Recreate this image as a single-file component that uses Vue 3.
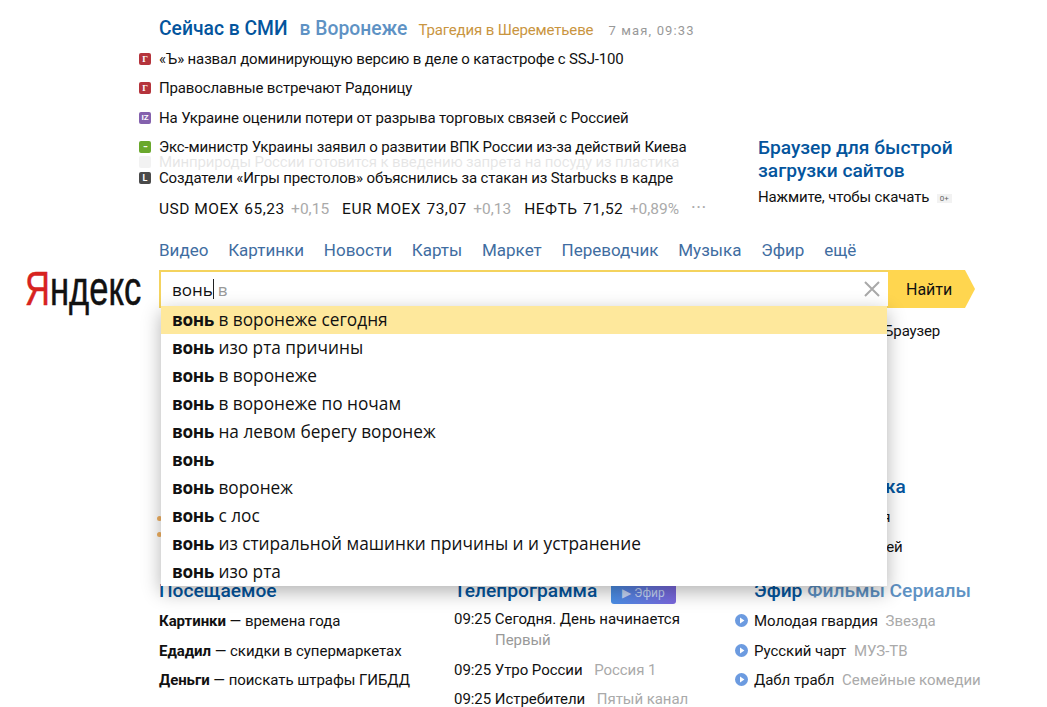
<template>
  <div class="page">
    <div class="top">
      <div class="news">
        <div class="news-head">
          <span class="tab-active">Сейчас в СМИ</span>
          <span class="tab">в Воронеже</span>
          <span class="tab-topic">Трагедия в Шереметьеве</span>
          <span class="date">7 мая, 09:33</span>
        </div>
        <ul class="news-list">
          <li v-for="n in news" :key="n.text" class="news-item">
            <span class="badge" :class="n.kind">{{ n.mark }}</span>{{ n.text }}
          </li>
          <li class="news-item news-ghost">
            <span class="badge ghost"></span>Минприроды России готовится к введению запрета на посуду из пластика
          </li>
        </ul>
        <div class="stocks">
          <span v-for="s in stocks" :key="s.name" class="stock">
            {{ s.name }} <span class="stock-val">{{ s.value }}</span> <span class="stock-diff">{{ s.diff }}</span>
          </span>
          <span class="stock-more">···</span>
        </div>
      </div>
      <div class="promo">
        <div class="promo-title">Браузер для быстрой<br>загрузки сайтов</div>
        <div class="promo-sub">Нажмите, чтобы скачать <span class="age">0+</span></div>
      </div>
    </div>

    <nav class="services">
      <span v-for="s in services" :key="s">{{ s }}</span>
    </nav>

    <div class="search-row">
      <div class="logo"><span class="logo-text"><span class="logo-red">Я</span>ндекс</span></div>
      <div class="search">
        <div class="input">
          <span class="typed">вонь</span><span class="caret"></span><span class="hint">в</span>
          <svg class="clear" width="16" height="16" viewBox="0 0 16 16">
            <path d="M1 1l14 14M15 1L1 15" stroke="#a9a9a9" stroke-width="2" fill="none" />
          </svg>
        </div>
        <div class="go">Найти</div>
        <ul class="suggest">
          <li v-for="(s, i) in suggestions" :key="s" :class="{ on: i === 0 }"><b>вонь</b>{{ s }}</li>
        </ul>
      </div>
    </div>

    <div class="middle">
      <div class="mid-left">
        <div class="mid-line">Новый Яндекс.Браузер</div>
        <div class="mid-dots"><i></i><i></i></div>
      </div>
      <div class="mid-right">
        <div class="mid-title">Карта Воронежа</div>
        <div class="mid-text">Кино и расписания</div>
        <div class="mid-text">Лента всех новостей</div>
      </div>
    </div>

    <div class="bottom">
      <section class="col-visited">
        <h3 class="col-title">Посещаемое</h3>
        <div v-for="v in visited" :key="v.name" class="line"><b>{{ v.name }}</b> — {{ v.text }}</div>
      </section>
      <section class="col-tv">
        <h3 class="col-title">Телепрограмма<span class="air-btn">▶ Эфир</span></h3>
        <div class="tv-row">09:25 Сегодня. День начинается<div class="tv-channel">Первый</div></div>
        <div class="tv-row">09:25 Утро России <span class="muted">Россия 1</span></div>
        <div class="tv-row">09:25 Истребители <span class="muted">Пятый канал</span></div>
      </section>
      <section class="col-air">
        <h3 class="col-title">Эфир <span class="col-soft">Фильмы Сериалы</span></h3>
        <div v-for="a in air" :key="a.name" class="air-row">
          <svg class="play" width="13" height="13" viewBox="0 0 13 13">
            <circle cx="6.5" cy="6.5" r="6.5" fill="#6c9be0" />
            <path d="M5 3.6l4.4 2.9L5 9.4z" fill="#fff" />
          </svg>{{ a.name }} <span class="muted">{{ a.channel }}</span>
        </div>
      </section>
    </div>
  </div>
</template>

<script setup>
const news = [
  { kind: 'red', mark: 'Г', text: '«Ъ» назвал доминирующую версию в деле о катастрофе с SSJ-100' },
  { kind: 'red', mark: 'Г', text: 'Православные встречают Радоницу' },
  { kind: 'purple', mark: 'IZ', text: 'На Украине оценили потери от разрыва торговых связей с Россией' },
  { kind: 'green', mark: '•••', text: 'Экс-министр Украины заявил о развитии ВПК России из-за действий Киева' },
  { kind: 'dark', mark: 'L', text: 'Создатели «Игры престолов» объяснились за стакан из Starbucks в кадре' },
]

const stocks = [
  { name: 'USD MOEX', value: '65,23', diff: '+0,15' },
  { name: 'EUR MOEX', value: '73,07', diff: '+0,13' },
  { name: 'НЕФТЬ', value: '71,52', diff: '+0,89%' },
]

const services = ['Видео', 'Картинки', 'Новости', 'Карты', 'Маркет', 'Переводчик', 'Музыка', 'Эфир', 'ещё']

const suggestions = [
  ' в воронеже сегодня',
  ' изо рта причины',
  ' в воронеже',
  ' в воронеже по ночам',
  ' на левом берегу воронеж',
  '',
  ' воронеж',
  ' с лос',
  ' из стиральной машинки причины и и устранение',
  ' изо рта',
]

const visited = [
  { name: 'Картинки', text: 'времена года' },
  { name: 'Едадил', text: 'скидки в супермаркетах' },
  { name: 'Деньги', text: 'поискать штрафы ГИБДД' },
]

const air = [
  { name: 'Молодая гвардия', channel: 'Звезда' },
  { name: 'Русский чарт', channel: 'МУЗ-ТВ' },
  { name: 'Дабл трабл', channel: 'Семейные комедии' },
]
</script>

<style>
html, body { overflow: hidden; background: #fff; }
</style>

<style scoped>
.page {
  width: 1047px;
  height: 707px;
  overflow: hidden;
  box-sizing: border-box;
  padding: 17px 0 0 159px;
  font-family: Roboto, "Liberation Sans", sans-serif;
  font-size: 15px;
  letter-spacing: -0.14px;
  color: #111;
}

.top {
  display: flex;
  height: 205px;
}

.news {
  width: 599px;
}

.news-head {
  display: flex;
  align-items: baseline;
  height: 25px;
  white-space: nowrap;
}

.tab-active {
  font-size: 19.3px;
  font-weight: 500;
  letter-spacing: 0;
  color: #04559d;
  margin-right: 12px;
}

.tab {
  font-size: 19.3px;
  font-weight: 500;
  letter-spacing: 0;
  color: #5e92c4;
  margin-right: 11px;
}

.tab-topic {
  color: #c9953f;
  margin-right: 15px;
}

.date {
  font-size: 13px;
  color: #999;
  letter-spacing: 1.15px;
}

.news-list {
  list-style: none;
  margin: 3px 0 0;
  padding: 0;
  position: relative;
}

.news-item {
  position: relative;
  height: 29.3px;
  line-height: 29px;
  white-space: nowrap;
}

.news-item:nth-child(4) {
  height: 31px;
}

.news-ghost {
  position: absolute;
  left: 0;
  top: 103px;
  opacity: 0.1;
}

.badge {
  position: absolute;
  left: -20px;
  top: 8px;
  width: 12px;
  height: 12px;
  border-radius: 2px;
  color: #fff;
  font-size: 9px;
  font-weight: 700;
  line-height: 12px;
  text-align: center;
  letter-spacing: 0;
  overflow: hidden;
}

.red { background: #b5343c; font-family: "Liberation Serif", serif; }
.purple { background: #8461ad; font-size: 8px; }
.green { background: #6aa82c; font-size: 6px; letter-spacing: -1px; }
.dark { background: #4a4a4a; }
.ghost { background: #888; }

.stocks {
  display: flex;
  align-items: baseline;
  margin-top: 4px;
  font-size: 15.5px;
  letter-spacing: 0.5px;
  white-space: nowrap;
}

.stock {
  margin-right: 13px;
}

.stock-val {
  margin-left: 1px;
}

.stock-diff {
  color: #aaa;
  margin-left: 2px;
  letter-spacing: 0;
}

.stock-more {
  color: #aaa;
  font-size: 18px;
  margin-left: -1px;
}

.promo {
  padding-top: 119px;
}

.promo-title {
  font-size: 19.2px;
  font-weight: 500;
  letter-spacing: 0;
  line-height: 23px;
  color: #04559d;
}

.promo-sub {
  margin-top: 6px;
  white-space: nowrap;
}

.age {
  display: inline-block;
  font-size: 8px;
  color: #666;
  background: #f2f2f2;
  padding: 0 3px;
  margin-left: 4px;
  vertical-align: 1px;
}

.services {
  display: flex;
  gap: 19.8px;
  height: 48px;
  padding-top: 18px;
  box-sizing: border-box;
  font-size: 17px;
  letter-spacing: 0;
  color: #3f6da1;
}

.search-row {
  display: flex;
  margin-left: -159px;
}

.logo {
  width: 159px;
  height: 38px;
  flex: none;
  position: relative;
}

.logo-text {
  position: absolute;
  left: 25px;
  top: -5px;
  font-family: "Liberation Sans", sans-serif;
  font-size: 48px;
  line-height: 48px;
  letter-spacing: 0;
  color: #111;
  transform: scaleX(0.72);
  transform-origin: 0 0;
  white-space: nowrap;
  -webkit-text-stroke: 0.5px currentColor;
}

.logo-red {
  color: #d7231f;
}

.search {
  display: flex;
  position: relative;
  width: 816px;
  height: 38px;
}

.input {
  width: 729px;
  box-sizing: border-box;
  height: 38px;
  border: 2px solid #f4d35e;
  border-right: 0;
  padding-left: 11px;
  display: flex;
  align-items: center;
  font-family: "Open Sans", sans-serif;
  font-size: 17px;
  letter-spacing: 0;
  position: relative;
}

.caret {
  width: 1px;
  height: 20px;
  background: #222;
}

.hint {
  color: #999;
  margin-left: 4px;
}

.clear {
  position: absolute;
  right: 8px;
  top: 9px;
}

.go {
  width: 87px;
  height: 38px;
  line-height: 39px;
  background: #ffd64f;
  clip-path: polygon(0 0, 77px 0, 100% 50%, 77px 100%, 0 100%);
  font-size: 16px;
  letter-spacing: 0;
  padding-left: 18px;
  box-sizing: border-box;
}

.suggest {
  position: absolute;
  left: 2px;
  top: 36px;
  width: 726px;
  margin: 0;
  padding: 0;
  list-style: none;
  background: #fff;
  box-shadow: 0 6px 18px rgba(0, 0, 0, 0.3);
  z-index: 5;
}

.suggest li {
  height: 28px;
  line-height: 28px;
  padding-left: 11px;
  font-family: "Open Sans", sans-serif;
  font-size: 17.25px;
  letter-spacing: 0;
  white-space: pre;
}

.suggest b {
  letter-spacing: -0.4px;
}

.suggest .on {
  background: #fee89c;
}

.middle {
  display: flex;
  height: 271px;
}

.mid-left {
  width: 599px;
  position: relative;
}

.mid-line {
  position: absolute;
  left: 620px;
  top: 14px;
  white-space: nowrap;
}

.mid-dots i {
  position: absolute;
  left: -2px;
  top: 208px;
  width: 5px;
  height: 5px;
  border-radius: 50%;
  background: #f0b060;
}

.mid-dots i + i {
  top: 224px;
}

.mid-right {
  padding-top: 167px;
  white-space: nowrap;
}

.mid-title {
  font-size: 19px;
  font-weight: 500;
  letter-spacing: 0;
  color: #04559d;
  margin-bottom: 4px;
}

.mid-text {
  height: 30px;
  line-height: 30px;
}

.bottom {
  display: grid;
  grid-template-columns: 295px 300px 1fr;
  letter-spacing: -0.05px;
}

.col-title {
  margin: 0;
  font-size: 19.2px;
  font-weight: 500;
  letter-spacing: 0;
  line-height: 24px;
  color: #04559d;
  white-space: nowrap;
}

.col-soft {
  color: #5e92c4;
}

.air-btn {
  display: inline-block;
  font-size: 12px;
  font-weight: 400;
  line-height: 22px;
  padding: 0 11px;
  margin-left: 14px;
  color: #c5d5f5;
  border-radius: 3px;
  background: linear-gradient(90deg, #4a8fe6, #7a66dc);
  vertical-align: 0;
}

.line,
.air-row {
  height: 29.5px;
  line-height: 30px;
  white-space: nowrap;
}

.col-visited .line:first-of-type,
.col-air .air-row:first-of-type {
  margin-top: 3px;
}

.col-tv .tv-row:first-of-type {
  margin-top: 5px;
}

.tv-row {
  line-height: 21px;
  margin-bottom: 8.5px;
  white-space: nowrap;
}

.tv-channel {
  color: #999;
  padding-left: 41px;
}

.muted {
  color: #aaa;
  margin-left: 8px;
}

.air-row .muted {
  margin-left: 4px;
}

.air-row {
  position: relative;
}

.play {
  position: absolute;
  left: -19px;
  top: 8px;
}
</style>
